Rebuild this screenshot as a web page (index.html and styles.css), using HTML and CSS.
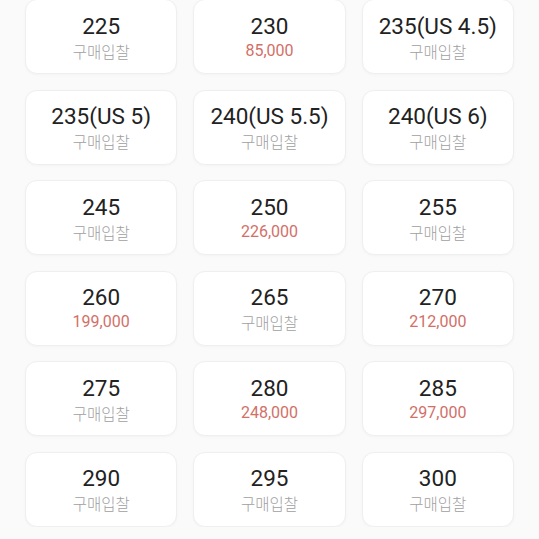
FILE: index.html
```html
<!DOCTYPE html>
<html lang="ko">
<head>
  <meta charset="UTF-8">
  <meta name="viewport" content="width=device-width, initial-scale=1.0">
  <title>사이즈 선택</title>
  <link rel="stylesheet" href="styles.css">
</head>
<body>
  <!-- 사이즈 목록 -->
  <div class="size-grid">
    <div class="size-card"><div class="size">225</div><div class="bid">구매입찰</div></div>
    <div class="size-card"><div class="size">230</div><div class="price">85,000</div></div>
    <div class="size-card"><div class="size">235(US 4.5)</div><div class="bid">구매입찰</div></div>

    <div class="size-card"><div class="size">235(US 5)</div><div class="bid">구매입찰</div></div>
    <div class="size-card"><div class="size">240(US 5.5)</div><div class="bid">구매입찰</div></div>
    <div class="size-card"><div class="size">240(US 6)</div><div class="bid">구매입찰</div></div>

    <div class="size-card"><div class="size">245</div><div class="bid">구매입찰</div></div>
    <div class="size-card"><div class="size">250</div><div class="price">226,000</div></div>
    <div class="size-card"><div class="size">255</div><div class="bid">구매입찰</div></div>

    <div class="size-card"><div class="size">260</div><div class="price">199,000</div></div>
    <div class="size-card"><div class="size">265</div><div class="bid">구매입찰</div></div>
    <div class="size-card"><div class="size">270</div><div class="price">212,000</div></div>

    <div class="size-card"><div class="size">275</div><div class="bid">구매입찰</div></div>
    <div class="size-card"><div class="size">280</div><div class="price">248,000</div></div>
    <div class="size-card"><div class="size">285</div><div class="price">297,000</div></div>

    <div class="size-card"><div class="size">290</div><div class="bid">구매입찰</div></div>
    <div class="size-card"><div class="size">295</div><div class="bid">구매입찰</div></div>
    <div class="size-card"><div class="size">300</div><div class="bid">구매입찰</div></div>
  </div>
</body>
</html>
```

FILE: styles.css
```css
body {
  margin: 0;
  padding: 0;
  background-color: #fafafa;
  font-family: Roboto, "Noto Sans CJK KR", sans-serif;
  overflow: hidden;
}

.size-grid {
  display: grid;
  grid-template-columns: repeat(3, 1fr);
  gap: 15.5px 16px;
  padding: 0 25px;
  margin-top: -1px;
}

.size-card {
  height: 75px;
  box-sizing: border-box;
  background-color: white;
  border: 1px solid #efefef;
  border-radius: 12px;
  box-shadow: 0 1px 3px rgba(0, 0, 0, 0.03);
  display: flex;
  flex-direction: column;
  align-items: center;
  justify-content: center;
}

.size {
  font-size: 22.5px;
  line-height: 28px;
  color: #222;
}

.bid, .price {
  font-size: 15.5px;
  line-height: 22px;
}

.bid {
  font-family: "Noto Sans CJK KR", sans-serif;
  font-weight: 300;
  color: #a0a0a0;
}

.price {
  font-family: Roboto, sans-serif;
  font-size: 16px;
  color: #d27068;
}
```
